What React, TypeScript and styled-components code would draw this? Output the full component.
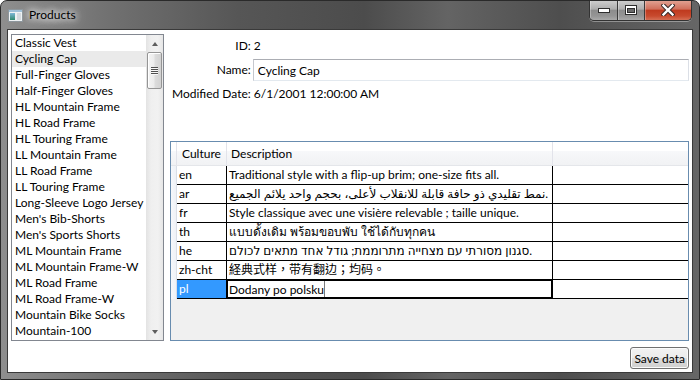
import React from "react";
import styled, { createGlobalStyle } from "styled-components";

const FONT = `Lato, "DejaVu Sans", "Noto Sans CJK TC", sans-serif`;

const GlobalStyle = createGlobalStyle`
  html, body {
    margin: 0;
    padding: 0;
    background: #ffffff;
  }
  body {
    width: 700px;
    height: 380px;
    overflow: hidden;
    font-family: ${FONT};
    font-size: 12px;
    color: #000;
  }
`;

const Window = styled.div`
  width: 700px;
  height: 380px;
  box-sizing: border-box;
  border: 1px solid #2a2a2a;
  border-radius: 7px 7px 0 0;
  background: linear-gradient(
    90deg,
    #8e8e8e 0%,
    #707070 16%,
    #565656 34%,
    #4c4c4c 52%,
    #646464 64%,
    #4e4e4e 80%,
    #666666 100%
  );
  display: flex;
  flex-direction: column;
  overflow: hidden;
`;

const TitleBar = styled.div`
  height: 28px;
  display: flex;
  align-items: flex-start;
  flex-shrink: 0;
`;

const AppIcon = styled.svg`
  margin: 8px 0 0 7px;
  flex-shrink: 0;
`;

const Title = styled.div`
  margin: 6px 0 0 6px;
  line-height: 16px;
  color: #000;
  text-shadow: 0 0 6px #fff, 0 0 10px #fff, 0 0 14px rgba(255, 255, 255, 0.8);
`;

const CaptionGroup = styled.div`
  margin: -1px 7px 0 auto;
  display: flex;
  height: 20px;
  border: 1px solid #333;
  border-top: none;
  border-radius: 0 0 5px 5px;
  overflow: hidden;
  box-shadow: 0 1px 0 rgba(255, 255, 255, 0.35);
`;

const CaptionButton = styled.div<{ $w: number; $close?: boolean }>`
  width: ${(p) => p.$w}px;
  display: flex;
  align-items: center;
  justify-content: center;
  border-left: ${(p) => (p.$close ? "1px solid #3a3a3a" : "none")};
  & + & {
    border-left: 1px solid #3a3a3a;
  }
  background: ${(p) =>
    p.$close
      ? "linear-gradient(#e3a697 0%, #d0705c 45%, #bf3a1f 52%, #c84a2e 80%, #d56f55 100%)"
      : "linear-gradient(#d0d0d0 0%, #aeaeae 45%, #8c8c8c 52%, #959595 80%, #a9a9a9 100%)"};
  box-shadow: inset 0 1px 0 rgba(255, 255, 255, 0.5), inset 1px 0 0 rgba(255, 255, 255, 0.3);
`;

const Client = styled.div`
  flex: 1;
  margin: 0 6px 6px;
  border: 1px solid #3a3a3a;
  background: #ffffff;
  display: grid;
  grid-template-columns: 153px 1fr;
  grid-template-rows: 1fr 22px;
  column-gap: 6px;
  row-gap: 6px;
  padding: 4px 3px 3px 3px;
  min-height: 0;
`;

const ListBox = styled.div`
  border: 1px solid #828790;
  display: flex;
  overflow: hidden;
  min-height: 0;
`;

const ListItems = styled.div`
  flex: 1;
  overflow: hidden;
  min-width: 0;
`;

const ListItem = styled.div<{ $selected?: boolean }>`
  height: 16px;
  line-height: 16px;
  padding-left: 3px;
  white-space: nowrap;
  background: ${(p) => (p.$selected ? "#eaeaea" : "transparent")};
`;

const ScrollBar = styled.div`
  width: 17px;
  display: flex;
  flex-direction: column;
  background: linear-gradient(90deg, #e3e3e3 0%, #efefef 30%, #f1f1f1 70%, #e6e6e6 100%);
`;

const ScrollButton = styled.div`
  height: 17px;
  display: flex;
  align-items: center;
  justify-content: center;
`;

const Arrow = styled.div<{ $down?: boolean }>`
  width: 0;
  height: 0;
  border-left: 3.5px solid transparent;
  border-right: 3.5px solid transparent;
  ${(p) => (p.$down ? "border-top: 4px solid #5e5e5e;" : "border-bottom: 4px solid #5e5e5e;")}
`;

const Track = styled.div`
  flex: 1;
  padding: 0 1px;
`;

const Thumb = styled.div`
  height: 37px;
  box-sizing: border-box;
  border: 1px solid #959595;
  border-radius: 2px;
  background: linear-gradient(90deg, #f4f4f4 0%, #ececec 45%, #dcdcdc 55%, #d2d2d2 100%);
  box-shadow: inset 1px 1px 0 #fff;
  display: flex;
  align-items: center;
  justify-content: center;
`;

const Grip = styled.div`
  width: 7px;
  height: 8px;
  background: repeating-linear-gradient(#505050 0 1px, #f8f8f8 1px 2px);
`;

const RightPanel = styled.div`
  display: flex;
  flex-direction: column;
  min-height: 0;
`;

const Form = styled.div`
  display: grid;
  grid-template-columns: auto 1fr;
  grid-auto-rows: 24px;
  column-gap: 2px;
  align-items: center;
  padding-left: 2px;
  margin-bottom: 35px;
`;

const FieldLabel = styled.div`
  text-align: right;
  line-height: 16px;
  white-space: nowrap;
`;

const FieldValue = styled.div`
  padding-left: 1px;
  line-height: 16px;
  white-space: nowrap;
`;

const TextBox = styled.div`
  height: 22px;
  box-sizing: border-box;
  border: 1px solid;
  border-color: #abadb3 #dbdfe6 #e3e9ef #c5c8ce;
  padding-left: 4px;
  display: flex;
  align-items: center;
  white-space: nowrap;
`;

const DataGrid = styled.div`
  flex: 1;
  border: 1px solid #688caf;
  background: #f0f0f0;
  display: flex;
  flex-direction: column;
  overflow: hidden;
`;

const GridRow = styled.div<{ $header?: boolean }>`
  display: grid;
  grid-template-columns: 6px 50px 326px 1fr;
  height: ${(p) => (p.$header ? 24 : 19)}px;
  flex-shrink: 0;
  ${(p) =>
    p.$header
      ? `background: linear-gradient(#ffffff 0%, #ffffff 40%, #f7f8fa 40%, #f1f2f4 100%);
         border-bottom: 1px solid #e4e6ea;
         box-sizing: border-box;`
      : ""}
`;

const HeaderCell = styled.div<{ $pad?: number }>`
  padding-left: ${(p) => p.$pad ?? 0}px;
  border-right: 1px solid #e2e3ea;
  line-height: 23px;
  white-space: nowrap;
  overflow: hidden;
`;

const RowHeader = styled.div`
  background: linear-gradient(90deg, #f6f8fb, #eef1f6);
  border-right: 1px solid #d9dee6;
`;

const Cell = styled.div<{ $selected?: boolean; $last?: boolean }>`
  box-sizing: border-box;
  border-bottom: 1px solid #000;
  border-right: ${(p) => (p.$last ? "none" : "1px solid #000")};
  background: ${(p) => (p.$selected ? "#3399ff" : "#ffffff")};
  color: ${(p) => (p.$selected ? "#ffffff" : "#000000")};
  padding-left: 2px;
  line-height: 18px;
  white-space: nowrap;
  overflow: hidden;
`;

const EditCell = styled.div`
  box-sizing: border-box;
  border-bottom: 1px solid #000;
  border-right: 1px solid #000;
  background: #fff;
`;

const Editor = styled.div`
  height: 100%;
  box-sizing: border-box;
  border: 1px solid #000;
  padding-left: 1px;
  display: flex;
  align-items: center;
  white-space: nowrap;
`;

const Caret = styled.span`
  display: inline-block;
  width: 1px;
  height: 16px;
  background: #7a7a7a;
`;

const SaveButton = styled.button`
  grid-column: 2;
  justify-self: end;
  height: 22px;
  padding: 0 3px;
  font-family: ${FONT};
  font-size: 12px;
  color: #000;
  border: 1px solid #707070;
  border-radius: 3px;
  background: linear-gradient(#f2f2f2 0%, #ebebeb 50%, #dddddd 50%, #cfcfcf 100%);
  box-shadow: inset 0 0 0 1px #fbfbfb;
`;

const products = [
  "Classic Vest",
  "Cycling Cap",
  "Full-Finger Gloves",
  "Half-Finger Gloves",
  "HL Mountain Frame",
  "HL Road Frame",
  "HL Touring Frame",
  "LL Mountain Frame",
  "LL Road Frame",
  "LL Touring Frame",
  "Long-Sleeve Logo Jersey",
  "Men's Bib-Shorts",
  "Men's Sports Shorts",
  "ML Mountain Frame",
  "ML Mountain Frame-W",
  "ML Road Frame",
  "ML Road Frame-W",
  "Mountain Bike Socks",
  "Mountain-100",
];

const descriptions = [
  { culture: "en", text: "Traditional style with a flip-up brim; one-size fits all." },
  { culture: "ar", text: "نمط تقليدي ذو حافة قابلة للانقلاب لأعلى، بحجم واحد يلائم الجميع." },
  { culture: "fr", text: "Style classique avec une visière relevable ; taille unique." },
  { culture: "th", text: "แบบดั้งเดิม พร้อมขอบพับ ใช้ได้กับทุกคน" },
  { culture: "he", text: "סגנון מסורתי עם מצחייה מתרוממת; גודל אחד מתאים לכולם." },
  { culture: "zh-cht", text: "経典式样，带有翻边；均码。" },
];

const App = () => {
  return (
    <>
      <GlobalStyle />
      <Window>
        <TitleBar>
          <AppIcon width="15" height="13" viewBox="0 0 15 13">
            <defs>
              <linearGradient id="ico" x1="0" y1="0" x2="0" y2="1">
                <stop offset="0" stopColor="#7fb7d8" />
                <stop offset="1" stopColor="#2f8a6e" />
              </linearGradient>
            </defs>
            <rect x="0.5" y="0.5" width="14" height="12" fill="#eef2f4" stroke="#8d969c" />
            <rect x="1" y="1" width="13" height="2" fill="#9fc0d8" />
            <rect x="2" y="4" width="5" height="7" fill="url(#ico)" />
            <rect x="9" y="4" width="4" height="7" fill="#d4dadf" />
          </AppIcon>
          <Title>Products</Title>
          <CaptionGroup>
            <CaptionButton $w={27}>
              <svg width="12" height="5" viewBox="0 0 12 5">
                <rect x="0.5" y="0.5" width="11" height="4" fill="#fff" stroke="#2e2e2e" />
              </svg>
            </CaptionButton>
            <CaptionButton $w={26}>
              <svg width="12" height="10" viewBox="0 0 12 10">
                <rect x="0.5" y="0.5" width="11" height="9" fill="#fff" stroke="#2e2e2e" />
                <rect x="2.5" y="3.5" width="7" height="4" fill="#6a6a6a" stroke="#2e2e2e" />
              </svg>
            </CaptionButton>
            <CaptionButton $w={46} $close>
              <svg width="14" height="12" viewBox="0 0 14 12">
                <path d="M2.5 1.5 L11.5 10.5 M11.5 1.5 L2.5 10.5" stroke="#3a2a28" strokeWidth="4.4" strokeLinecap="square" />
                <path d="M2.5 1.5 L11.5 10.5 M11.5 1.5 L2.5 10.5" stroke="#ffffff" strokeWidth="2.4" strokeLinecap="square" />
              </svg>
            </CaptionButton>
          </CaptionGroup>
        </TitleBar>

        <Client>
          <ListBox>
            <ListItems>
              {products.map((name) => (
                <ListItem key={name} $selected={name === "Cycling Cap"}>
                  {name}
                </ListItem>
              ))}
            </ListItems>
            <ScrollBar>
              <ScrollButton>
                <Arrow />
              </ScrollButton>
              <Track>
                <Thumb>
                  <Grip />
                </Thumb>
              </Track>
              <ScrollButton>
                <Arrow $down />
              </ScrollButton>
            </ScrollBar>
          </ListBox>

          <RightPanel>
            <Form>
              <FieldLabel>ID:</FieldLabel>
              <FieldValue>2</FieldValue>
              <FieldLabel>Name:</FieldLabel>
              <TextBox>Cycling Cap</TextBox>
              <FieldLabel>Modified Date:</FieldLabel>
              <FieldValue>6/1/2001 12:00:00 AM</FieldValue>
            </Form>

            <DataGrid>
              <GridRow $header>
                <HeaderCell />
                <HeaderCell $pad={5}>Culture</HeaderCell>
                <HeaderCell $pad={4}>Description</HeaderCell>
                <HeaderCell style={{ borderRight: "none" }} />
              </GridRow>
              {descriptions.map((d) => (
                <GridRow key={d.culture}>
                  <RowHeader />
                  <Cell>{d.culture}</Cell>
                  <Cell>{d.text}</Cell>
                  <Cell $last />
                </GridRow>
              ))}
              <GridRow>
                <RowHeader />
                <Cell $selected>pl</Cell>
                <EditCell>
                  <Editor>
                    Dodany po polsku
                    <Caret />
                  </Editor>
                </EditCell>
                <Cell $last />
              </GridRow>
            </DataGrid>
          </RightPanel>

          <SaveButton>Save data</SaveButton>
        </Client>
      </Window>
    </>
  );
};

export default App;
